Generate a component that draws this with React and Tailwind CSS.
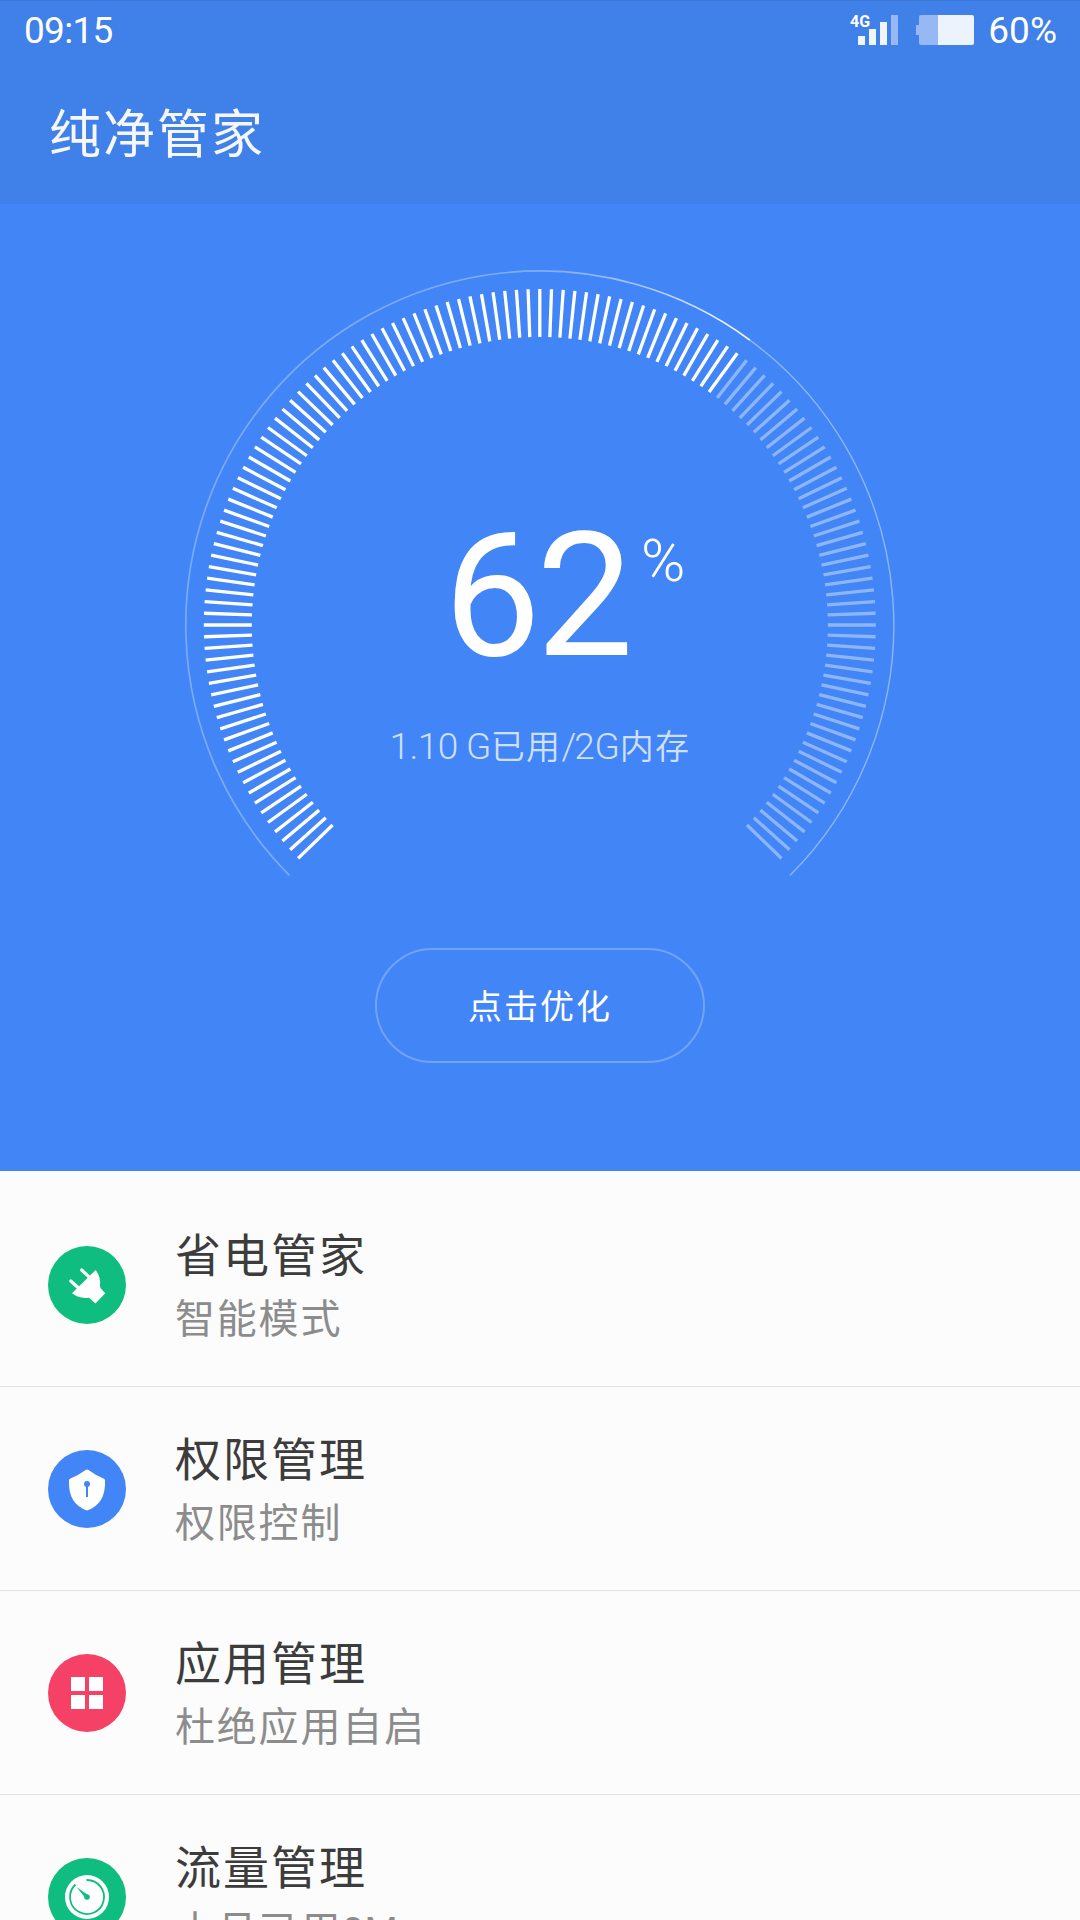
const CENTER = { x: 539.8, y: 421 };

const polar = (deg, r) => {
  const a = (deg * Math.PI) / 180;
  return [CENTER.x + r * Math.sin(a), CENTER.y - r * Math.cos(a)];
};

const arc = (from, to, r) => {
  const [x1, y1] = polar(from, r);
  const [x2, y2] = polar(to, r);
  return `M${x1} ${y1}A${r} ${r} 0 ${to - from > 180 ? 1 : 0} 1 ${x2} ${y2}`;
};

const TICKS = Array.from({ length: 135 }, (_, i) => -134 + i * 2);
const PROGRESS = 36;

function Gauge() {
  return (
    <svg className="col-start-1 row-start-1 block h-[697px] w-[1080px]" viewBox="0 0 1080 697" fill="none">
      <defs>
        <linearGradient id="sweep" gradientUnits="userSpaceOnUse" x1="186" y1="0" x2="750" y2="0">
          <stop offset="0" stopColor="#fff" stopOpacity="0.3" />
          <stop offset="0.62" stopColor="#fff" stopOpacity="0.32" />
          <stop offset="0.8" stopColor="#fff" stopOpacity="0.5" />
          <stop offset="1" stopColor="#fff" stopOpacity="1" />
        </linearGradient>
      </defs>
      <path d={arc(-135, 36.4, 354)} stroke="url(#sweep)" strokeWidth="1.7" />
      <path d={arc(36.4, 135, 354)} stroke="#fff" strokeOpacity="0.4" strokeWidth="1.4" />
      {TICKS.map((deg) => {
        const [x1, y1] = polar(deg, 288);
        const [x2, y2] = polar(deg, 336);
        return (
          <line key={deg} x1={x1} y1={y1} x2={x2} y2={y2} stroke="#fff" strokeWidth="3.3" strokeOpacity={deg <= PROGRESS ? 1 : 0.4} />
        );
      })}
    </svg>
  );
}

function StatusBar() {
  return (
    <div className="flex h-[60px] items-center pl-[24px] pr-[23px] font-['Roboto',sans-serif] text-[37px] leading-[60px] text-white">
      <span className="tracking-[-0.7px]">09:15</span>
      <svg className="mb-[8px] ml-auto h-[36px] w-[50px]" viewBox="0 0 50 36" fill="#fff">
        <text x="0" y="18" fontSize="16" fontWeight="700" fontFamily="Roboto, sans-serif">4G</text>
        <rect x="8" y="27" width="7" height="9" opacity="0.93" />
        <rect x="19" y="20" width="7" height="16" opacity="0.93" />
        <rect x="30" y="13" width="7" height="23" opacity="0.93" />
        <rect x="41" y="6" width="7" height="30" opacity="0.45" />
      </svg>
      <svg className="mb-[2px] ml-[16px] h-[30px] w-[58px]" viewBox="0 0 58 30" fill="#fff">
        <path d="M5 0H22V30H5a2 2 0 0 1-2-2V20H0V10H3V2a2 2 0 0 1 2-2Z" opacity="0.45" />
        <path d="M22 0H56a2 2 0 0 1 2 2V28a2 2 0 0 1-2 2H22Z" opacity="0.9" />
      </svg>
      <span className="ml-[14px]">60%</span>
    </div>
  );
}

function PlugIcon() {
  return (
    <svg className="h-[78px] w-[78px]" viewBox="0 0 78 78" fill="#fff">
      <path d="M47.700 24Q53 31 52 40.500Q52.500 42.500 57.300 47.300L47.500 57.500L41 51.700Q31 53 24 47.300Z" />
      <path d="M33.700 24L41 30.800M22.800 35L30.500 42" stroke="#fff" strokeWidth="3.2" strokeLinecap="round" />
    </svg>
  );
}

function ShieldIcon() {
  return (
    <svg className="h-[78px] w-[78px]" viewBox="0 0 78 78" fill="#fff">
      <path d="M38 19.800Q39 19 40 19.800Q47 25 56 28.800Q57 29.300 57 30.500Q58 54 39 60.500Q20 54 21 30.500Q21 29.300 22 28.800Q31 25 38 19.800Z" />
      <circle cx="39" cy="34" r="3" fill="#4285f6" />
      <path d="M39 34V47" stroke="#4285f6" strokeWidth="2" />
    </svg>
  );
}

function GridIcon() {
  return (
    <div className="grid grid-cols-2 gap-[4px]">
      <i className="size-[14px] bg-white" />
      <i className="size-[14px] bg-white" />
      <i className="size-[14px] bg-white" />
      <i className="size-[14px] bg-white" />
    </div>
  );
}

function MeterIcon() {
  return (
    <svg className="h-[78px] w-[78px]" viewBox="0 0 78 78" fill="none">
      <circle cx="39" cy="39" r="22" fill="#fff" />
      <path d="M38.500 22A17 17 0 1 1 27.500 26.500" stroke="#0fbd80" strokeWidth="1.8" />
      <path d="M28.500 29L40 37L37.500 40Z" fill="#0fbd80" />
      <circle cx="39" cy="39" r="2.8" fill="#0fbd80" />
    </svg>
  );
}

const ROWS = [
  { title: '省电管家', sub: '智能模式', tone: 'bg-[#0fbd80]', Icon: PlugIcon },
  { title: '权限管理', sub: '权限控制', tone: 'bg-[#4285f6]', Icon: ShieldIcon },
  { title: '应用管理', sub: '杜绝应用自启', tone: 'bg-[#f44165]', Icon: GridIcon },
  { title: '流量管理', sub: '本月已用', amount: '0M', tone: 'bg-[#0fbd80]', Icon: MeterIcon },
];

export default function App() {
  return (
    <div className="flex h-[1920px] w-[1080px] flex-col overflow-hidden bg-[#fcfcfc] font-['Roboto','Noto_Sans_CJK_SC',sans-serif]">
      <header className="h-[204px] shrink-0 border-t border-[#3d78d8] bg-[#4080e9]">
        <StatusBar />
        <h1 className="pl-[49px] pt-[35px] text-[52px] font-normal leading-[80px] tracking-[2px] text-[#f6f6fd]">纯净管家</h1>
      </header>

      <section className="flex h-[967px] shrink-0 flex-col items-center bg-[#4285f6] text-white">
        <div className="grid">
          <Gauge />
          <div className="col-start-1 row-start-1 flex flex-col items-center pt-[289px]">
            <div className="flex items-start pl-[49px]">
              <span className="text-[173px] leading-[206px] tracking-[-4.5px]">62</span>
              <span className="ml-[12px] mt-[33px] text-[60px] font-light leading-[70px]">%</span>
            </div>
            <div className="mt-[18px] flex whitespace-pre text-[34px] leading-[60px] text-white/75">
              <span className="text-[37px] font-light tracking-[-0.6px]">1.10 G</span>
              <span className="font-[350] tracking-[1.4px]">已用</span>
              <span className="text-[37px] font-light tracking-[-2px]">/</span>
              <span className="text-[37px] font-light tracking-[-0.2px]">2G</span>
              <span className="font-[350] tracking-[1.4px]">内存</span>
            </div>
          </div>
        </div>
        <button className="mt-[47px] h-[115px] w-[330px] rounded-full border-2 border-white/25 pt-[3px] text-[34px] tracking-[2px]">点击优化</button>
      </section>

      <ul className="pt-[12px]">
        {ROWS.map(({ title, sub, amount, tone, Icon }) => (
          <li key={title} className="flex h-[204px] items-center border-b border-[#e3e3e3] pl-[48px]">
            <div className={`flex size-[78px] items-center justify-center rounded-full ${tone}`}>
              <Icon />
            </div>
            <div className="ml-[49px] pt-[4px]">
              <div className="text-[46px] leading-[64px] tracking-[2px] text-[#3c3c3c]">{title}</div>
              <div className="mt-[2px] text-[40px] leading-[60px] tracking-[1.8px] text-[#8c8c8c]">
                {sub}
                {amount && <span className="text-[38px] tracking-[1px]">{amount}</span>}
              </div>
            </div>
          </li>
        ))}
      </ul>
    </div>
  );
}
